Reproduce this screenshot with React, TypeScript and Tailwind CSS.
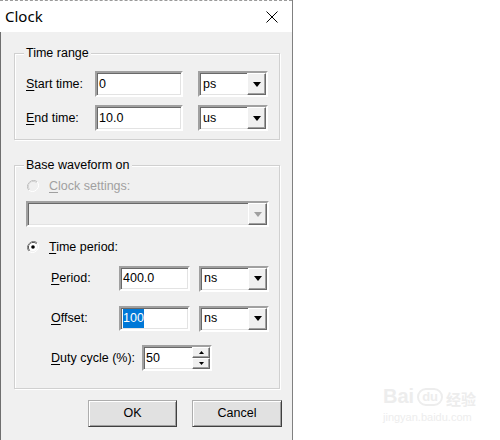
import React from 'react'

const sunken =
  'border-2 border-t-[#a0a0a0] border-l-[#a0a0a0] border-b-white border-r-white shadow-[inset_1px_1px_0_#696969,inset_-1px_-1px_0_#e3e3e3]'
const raised =
  'border border-t-white border-l-white border-b-[#696969] border-r-[#696969] shadow-[inset_-1px_-1px_0_#a0a0a0]'

function U({ c }: { c: string }) {
  return <span className="underline underline-offset-2">{c}</span>
}

function Arrow({ disabled = false, up = false, small = false }: { disabled?: boolean; up?: boolean; small?: boolean }) {
  const w = small ? 5 : 8
  const h = small ? 3 : 5
  return (
    <svg width={w} height={h} viewBox={`0 0 ${w} ${h}`} aria-hidden="true">
      <path d={up ? `M0 ${h} L${w / 2} 0 L${w} ${h} Z` : `M0 0 L${w} 0 L${w / 2} ${h} Z`} fill={disabled ? '#a0a0a0' : '#000'} />
    </svg>
  )
}

function Select({ value, w = 'w-[70px]', disabled = false }: { value: string; w?: string; disabled?: boolean }) {
  return (
    <div className={`${w} h-[26px] flex ${sunken} ${disabled ? 'bg-[#f0f0f0]' : 'bg-white'}`}>
      <div className="flex-1 pl-[3px] flex items-center">{value}</div>
      <div className={`w-[19px] bg-[#f0f0f0] flex items-center justify-center ${raised}`}>
        <Arrow disabled={disabled} />
      </div>
    </div>
  )
}

function Input({ children, w = 'w-[88px]', h = 'h-[26px]' }: { children: React.ReactNode; w?: string; h?: string }) {
  return <div className={`${w} ${h} bg-white flex items-center pl-[2px] ${sunken}`}>{children}</div>
}

function Radio({ checked, disabled = false }: { checked: boolean; disabled?: boolean }) {
  const dark = disabled ? '#c0c0c0' : '#808080'
  const darker = disabled ? '#d0d0d0' : '#404040'
  return (
    <svg width="12" height="12" viewBox="0 0 12 12" aria-hidden="true">
      <path d="M10.2 1.8 A6 6 0 0 0 1.8 10.2" fill="none" stroke={dark} strokeWidth="1" />
      <path d="M9.5 2.5 A5 5 0 0 0 2.5 9.5" fill="none" stroke={darker} strokeWidth="1" />
      <path d="M1.8 10.2 A6 6 0 0 0 10.2 1.8" fill="none" stroke="#fff" strokeWidth="1" />
      <circle cx="6" cy="6" r="4" fill={disabled ? '#f0f0f0' : '#fff'} />
      {checked && <circle cx="6" cy="6" r="1.8" fill="#000" />}
    </svg>
  )
}

function Group({ title, className, children }: { title: string; className: string; children: React.ReactNode }) {
  return (
    <div className={`relative w-[266px] border border-[#d0d0d0] shadow-[inset_1px_1px_0_#fff,1px_1px_0_#fff] ${className}`}>
      <span className="absolute -top-[9px] left-[9px] bg-[#f0f0f0] px-[2px] leading-[16px]">{title}</span>
      {children}
    </div>
  )
}

function Button({ children, w }: { children: React.ReactNode; w: string }) {
  return (
    <button className={`${w} h-[27px] bg-[#e1e1e1] flex items-center justify-center border border-[#adadad] border-b-[#404040] border-r-[#404040] shadow-[inset_1px_1px_0_#fff,inset_-1px_-1px_0_#a0a0a0]`}>
      {children}
    </button>
  )
}

export default function App() {
  return (
    <div className="relative w-[500px] h-[440px] bg-white flex text-[12.5px] text-black font-['Liberation_Sans',Arial,sans-serif]">
      <div className="w-[293px] h-[440px] flex flex-col border-r border-[#808080]">
        <div className="h-[32px] bg-white border-t border-dashed border-[#9a9a9a] flex items-center justify-between pl-[5px] pr-[14px]">
          <span className="text-[15px] font-['Noto_Sans',sans-serif] leading-none">Clock</span>
          <svg width="12" height="12" viewBox="0 0 12 12" aria-hidden="true">
            <path d="M0.5 0.5 L11.5 11.5 M11.5 0.5 L0.5 11.5" stroke="#000" strokeWidth="1" />
          </svg>
        </div>
        <div className="flex-1 bg-[#f0f0f0] border-l border-[#6f6f6f] pl-[13px] pt-[21px] flex flex-col">
          <Group title="Time range" className="h-[87px] pl-[11px] pt-[17px]">
            <div className="flex items-center h-[26px]">
              <span className="w-[69px]"><U c="S" />tart time:</span>
              <Input>0</Input>
              <div className="ml-[15px]"><Select value="ps" /></div>
            </div>
            <div className="flex items-center h-[26px] mt-[8px]">
              <span className="w-[69px]"><U c="E" />nd time:</span>
              <Input>10.0</Input>
              <div className="ml-[15px]"><Select value="us" /></div>
            </div>
          </Group>

          <Group title="Base waveform on" className="mt-[25px] h-[224px] pl-[11px] pt-[12px]">
            <div className="flex items-center h-[16px] text-[#a0a0a0]">
              <span className="ml-[1px]"><Radio checked={false} disabled /></span>
              <span className="ml-[10px]"><U c="C" />lock settings:</span>
            </div>
            <div className="mt-[7px]">
              <Select value="" w="w-[243px]" disabled />
            </div>
            <div className="flex items-center h-[16px] mt-[12px]">
              <span className="ml-[1px]"><Radio checked /></span>
              <span className="ml-[10px]"><U c="T" />ime period:</span>
            </div>
            <div className="flex items-center h-[25px] mt-[11px] pl-[25px]">
              <span className="w-[68px]"><U c="P" />eriod:</span>
              <Input w="w-[71px]" h="h-[25px]">400.0</Input>
              <div className="ml-[9px]"><Select value="ns" /></div>
            </div>
            <div className="flex items-center h-[25px] mt-[15px] pl-[25px]">
              <span className="w-[68px]"><U c="O" />ffset:</span>
              <Input w="w-[71px]" h="h-[25px]">
                <span className="bg-[#0078d7] text-white">100</span>
              </Input>
              <div className="ml-[9px]"><Select value="ns" /></div>
            </div>
            <div className="flex items-center h-[26px] mt-[14px] pl-[25px]">
              <span className="w-[91px]"><U c="D" />uty cycle (%):</span>
              <div className={`w-[70px] h-[26px] bg-white flex ${sunken}`}>
                <div className="flex-1 pl-[2px] flex items-center">50</div>
                <div className="w-[18px] flex flex-col">
                  <div className={`flex-1 bg-[#f0f0f0] flex items-center justify-center ${raised}`}>
                    <Arrow up small />
                  </div>
                  <div className={`flex-1 bg-[#f0f0f0] flex items-center justify-center ${raised}`}>
                    <Arrow small />
                  </div>
                </div>
              </div>
            </div>
          </Group>

          <div className="mt-[11px] w-[268px] flex justify-end gap-[15px]">
            <Button w="w-[89px]">OK</Button>
            <Button w="w-[90px]">Cancel</Button>
          </div>
        </div>
      </div>

      <div className="absolute left-[383px] top-[386px] flex flex-col text-[#ededed] select-none">
        <div className="flex items-end gap-[3px] font-bold text-[20px] leading-none">
          <span>Bai</span>
          <span className="text-[13px] border-2 border-[#ededed] rounded-full px-[3px] leading-[14px]">du</span>
          <span className="text-[15px] font-['Noto_Sans_CJK_SC',sans-serif]">经验</span>
        </div>
        <span className="mt-[6px] text-[11px] leading-none">jingyan.baidu.com</span>
      </div>
    </div>
  )
}
